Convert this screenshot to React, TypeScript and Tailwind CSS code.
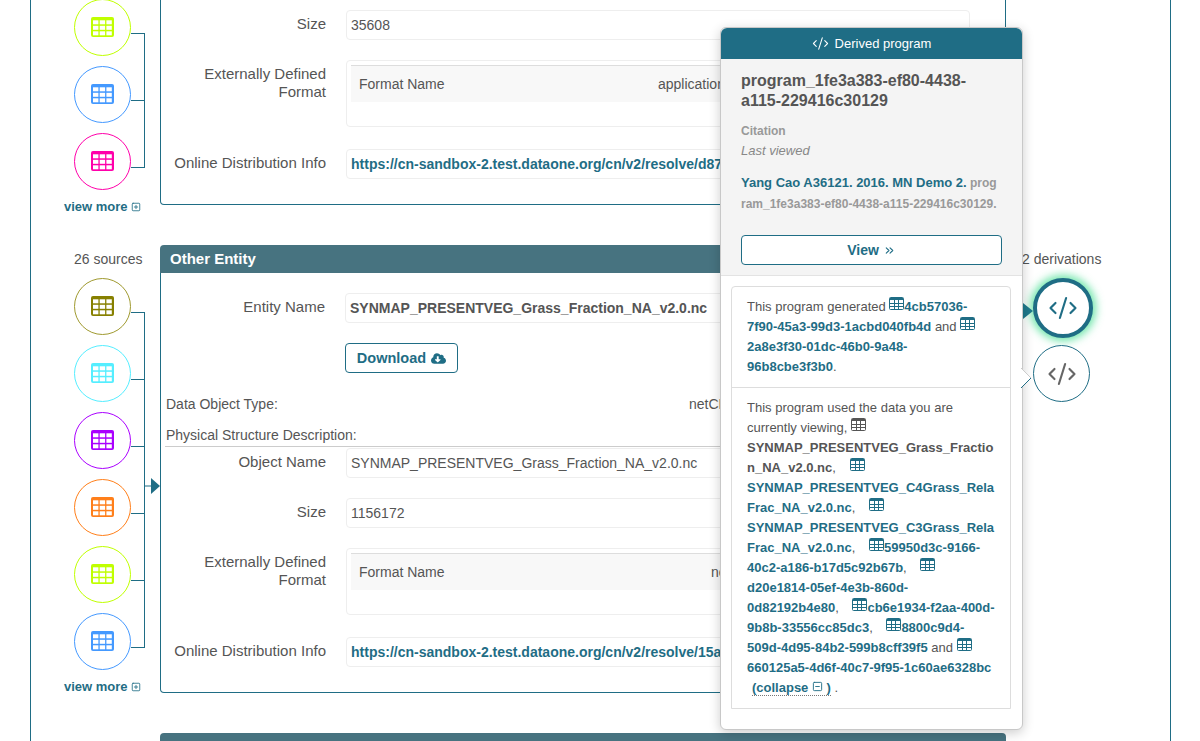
import { ReactNode } from "react";
import { ChevronsRight, CodeXml, SquareMinus, SquarePlus } from "lucide-react";
import { FaCloudDownloadAlt } from "react-icons/fa";

const TEAL = "text-[#1f6d85]";

const sourcesA = [
  "text-[#c0ff00] border-[#c0ff00]",
  "text-[#4499ff] border-[#4499ff]",
  "text-[#ff00aa] border-[#ff00aa]",
];
const sourcesB = [
  "text-[#878000] border-[#a09a30]",
  "text-[#55eeff] border-[#55eeff]",
  "text-[#aa00ff] border-[#aa00ff]",
  "text-[#ff7f1a] border-[#ff7f1a]",
  "text-[#c0ff00] border-[#c0ff00]",
  "text-[#4499ff] border-[#4499ff]",
];

function SolidTable() {
  return (
    <svg width="23" height="20" viewBox="0 0 23 20">
      <rect width="23" height="20" rx="2" fill="currentColor" />
      {[3.3, 8.8, 14.3].map((y) =>
        [2, 8.7, 15.4].map((x) => (
          <rect key={`${x}-${y}`} x={x} y={y} width="5.4" height="4" fill="#fff" />
        ))
      )}
    </svg>
  );
}

function LineTable({ gray }: { gray?: boolean }) {
  return (
    <svg
      width="15"
      height="13"
      viewBox="0 0 15 13"
      className={`inline-block align-[1px] ${gray ? "text-[#555]" : TEAL}`}
    >
      <rect x="0.5" y="0.5" width="14" height="12" rx="1" fill="none" stroke="currentColor" />
      <path d="M1 1h13v2H1z" fill="currentColor" />
      <path d="M5.5 3v9M9.5 3v9M1 6.5h13M1 9.5h13" stroke="currentColor" strokeWidth="1" />
    </svg>
  );
}

function SourceColumn({ items, arrow }: { items: string[]; arrow?: boolean }) {
  return (
    <div className="relative pl-[43px]">
      {items.map((cls, i) => (
        <div key={i} className="flex h-[67px]">
          <div className={`flex h-[57px] w-[57px] items-center justify-center rounded-full border bg-white pb-[2px] ${cls}`}>
            <SolidTable />
          </div>
          <div className="w-[14px]">
            <div className={`h-[35px] border-b border-[#1f6d85] ${i > 0 ? "border-r" : ""}`} />
            <div className={`h-[32px] border-[#1f6d85] ${i < items.length - 1 ? "border-r" : ""}`} />
          </div>
        </div>
      ))}
      {arrow && (
        <svg width="15" height="16" viewBox="0 0 15 16" className="absolute left-[114px] top-[200px]">
          <path d="M0 8h6" stroke="#1f6d85" />
          <path d="M6 0l9 8-9 8z" fill="#1f6d85" />
        </svg>
      )}
    </div>
  );
}

function ViewMore() {
  return (
    <div className={`-mb-[9px] flex h-[14px] items-center gap-[3px] pl-[33px] text-[13px] font-bold leading-[14px] ${TEAL}`}>
      view more
      <SquarePlus size={10} strokeWidth={2} />
    </div>
  );
}

function Field({ label, className, labelWidth, children }: { label: ReactNode; className?: string; labelWidth?: string; children: ReactNode }) {
  return (
    <div className={`flex gap-5 ${className ?? ""}`}>
      <div className={`${labelWidth ?? "w-[165px]"} shrink-0 pt-[5px] text-right text-[15px] leading-[18px]`}>{label}</div>
      {children}
    </div>
  );
}

function Value({ children, className }: { children: ReactNode; className?: string }) {
  return (
    <div className={`h-[30px] w-[624px] overflow-hidden whitespace-nowrap rounded border border-[#eee] pl-1 text-[14px] leading-[28px] ${className ?? ""}`}>
      {children}
    </div>
  );
}

function FormatBox({ value, valueClass }: { value: string; valueClass: string }) {
  return (
    <div className="h-[67px] w-[624px] rounded border border-[#eee] px-1 pt-1">
      <div className="flex h-[37px] items-center border-t border-[#ddd] bg-[#f8f8f8] pl-2 text-[14px]">
        <span className={valueClass}>Format Name</span>
        <span>{value}</span>
      </div>
    </div>
  );
}

function Panel2Body() {
  return (
    <div className="pt-5">
      <Field label="Entity Name" labelWidth="w-[164px]">
        <Value className="pl-[4px] font-bold">SYNMAP_PRESENTVEG_Grass_Fraction_NA_v2.0.nc</Value>
      </Field>
      <div className="ml-[184px] mt-5">
        <div className={`flex h-[30px] w-[113px] items-center justify-center gap-[5px] rounded border border-[#1f6d85] pt-px text-[14.5px] font-bold ${TEAL}`}>
          Download
          <FaCloudDownloadAlt size={15} />
        </div>
      </div>
      <div className="mt-[22px] flex pl-[5px] text-[14px] leading-[18px]">
        <span className="w-[523px]">Data Object Type:</span>
        <span>netCDF</span>
      </div>
      <div className="mt-[13px] pl-[5px] text-[14px] leading-[18px]">Physical Structure Description:</div>
      <div className="ml-1 mt-[2px] border-t border-[#ccc]" />
      <Field label="Object Name" className="mt-px">
        <Value>SYNMAP_PRESENTVEG_Grass_Fraction_NA_v2.0.nc</Value>
      </Field>
      <Field label="Size" className="mt-5">
        <Value>1156172</Value>
      </Field>
      <Field label="Externally Defined Format" className="mt-5">
        <FormatBox value="ne" valueClass="w-[352px]" />
      </Field>
      <Field label="Online Distribution Info" className="mt-[22px]">
        <Value className={`font-bold ${TEAL}`}>https://cn-sandbox-2.test.dataone.org/cn/v2/resolve/15a</Value>
      </Field>
    </div>
  );
}

const Link = ({ children }: { children: ReactNode }) => <b className={TEAL}>{children}</b>;
const Gray = ({ children }: { children: ReactNode }) => <b className="text-[#555]">{children}</b>;

const generatedLines: ReactNode[] = [
  <>This program generated <LineTable /><Link>4cb57036-</Link></>,
  <><Link>7f90-45a3-99d3-1acbd040fb4d</Link> and <LineTable /></>,
  <Link>2a8e3f30-01dc-46b0-9a48-</Link>,
  <><Link>96b8cbe3f3b0</Link>.</>,
];

const usedLines: ReactNode[] = [
  "This program used the data you are",
  <>currently viewing, <LineTable gray /></>,
  <Gray>SYNMAP_PRESENTVEG_Grass_Fractio</Gray>,
  <><Gray>n_NA_v2.0.nc</Gray>, <span className="ml-[10px]"><LineTable /></span></>,
  <Link>SYNMAP_PRESENTVEG_C4Grass_Rela</Link>,
  <><Link>Frac_NA_v2.0.nc</Link>, <span className="ml-[10px]"><LineTable /></span></>,
  <Link>SYNMAP_PRESENTVEG_C3Grass_Rela</Link>,
  <><Link>Frac_NA_v2.0.nc</Link>, <span className="ml-[10px]"><LineTable /></span><Link>59950d3c-9166-</Link></>,
  <><Link>40c2-a186-b17d5c92b67b</Link>, <span className="ml-[10px]"><LineTable /></span></>,
  <Link>d20e1814-05ef-4e3b-860d-</Link>,
  <><Link>0d82192b4e80</Link>, <span className="ml-[10px]"><LineTable /></span><Link>cb6e1934-f2aa-400d-</Link></>,
  <><Link>9b8b-33556cc85dc3</Link>, <span className="ml-[10px]"><LineTable /></span><Link>8800c9d4-</Link></>,
  <><Link>509d-4d95-84b2-599b8cff39f5</Link> and <LineTable /></>,
  <Link>660125a5-4d6f-40c7-9f95-1c60ae6328bc</Link>,
  <span className="ml-[5px]">
    <span className={`border-b border-dotted border-[#777] font-bold ${TEAL}`}>
      (collapse <SquareMinus size={11} strokeWidth={2} className="inline-block align-[0px]" /> )
    </span>{" "}.
  </span>,
];

function Lines({ lines }: { lines: ReactNode[] }) {
  return (
    <>
      {lines.map((line, i) => (
        <div key={i} className="h-5 whitespace-nowrap">{line}</div>
      ))}
    </>
  );
}

function Popover() {
  return (
    <div className="absolute left-[720px] top-[27px] z-10 w-[303px] rounded-md border border-[#c8c8c8] bg-white pb-5 shadow-[0_3px_12px_rgba(0,0,0,0.2)]">
      <div className="flex h-[31px] items-center justify-center gap-[6px] rounded-t-md bg-[#1f6d85] text-[13px] text-white">
        <CodeXml size={17} strokeWidth={1.5} />
        Derived program
      </div>
      <div className="h-[217px] border-b border-[#e3e3e3] bg-[#f4f4f4] px-5 pt-[12px]">
        <div className="text-[16px] font-bold leading-5 text-[#555]">
          program_1fe3a383-ef80-4438-
          <br />
          a115-229416c30129
        </div>
        <div className="mt-[10px] text-[12px] font-bold leading-5 text-[#999]">Citation</div>
        <div className="text-[13px] italic leading-5 text-[#888]">Last viewed</div>
        <div className="mt-[11px] whitespace-nowrap text-[12px] font-bold leading-[21px]">
          <span className={`text-[13px] ${TEAL}`}>Yang Cao A36121. 2016. MN Demo 2.</span> <span className="text-[#999]">prog</span>
          <br />
          <span className="text-[#999]">ram_1fe3a383-ef80-4438-a115-229416c30129.</span>
        </div>
        <div className={`mt-[20px] flex h-[30px] items-center justify-center gap-1 rounded border border-[#1f6d85] bg-white text-[14px] font-bold ${TEAL}`}>
          View
          <ChevronsRight size={13} strokeWidth={2} />
        </div>
      </div>
      <div className="ml-[10px] mr-[11px] mt-[10px] rounded-t border border-[#ddd] text-[13px] leading-5 text-[#555]">
        <div className="border-b border-[#ddd] px-[15px] pb-[10px] pt-[10px]">
          <Lines lines={generatedLines} />
        </div>
        <div className="px-[15px] pb-[10px] pt-[10px]">
          <Lines lines={usedLines} />
        </div>
      </div>
      <svg width="12" height="22" viewBox="0 0 12 22" className="absolute -right-[11px] top-[339px]">
        <path d="M0 1l10 10L0 21z" fill="#fff" />
        <path d="M0 1l10 10" stroke="#ccc" fill="none" />
        <path d="M10 11L0 21" stroke="#1f6d85" fill="none" />
      </svg>
    </div>
  );
}

export default function App() {
  return (
    <div className="relative h-[741px] overflow-hidden bg-white font-['Liberation_Sans',Arial,sans-serif] text-[#555]">
      <div className="ml-[30px] flex h-[741px] w-[1141px] flex-col gap-10 border-x border-[#1f6d85]">
        {/* first entity, scrolled off the top */}
        <div className="-mt-px flex">
          <div className="w-[129px] shrink-0">
            <SourceColumn items={sourcesA} />
            <ViewMore />
          </div>
          <div className="h-[206px] w-[846px] shrink-0 rounded-b border-x border-b border-[#1f6d85] pt-[11px]">
            <Field label="Size">
              <Value>35608</Value>
            </Field>
            <Field label="Externally Defined Format" className="mt-5">
              <FormatBox value="application" valueClass="w-[299px]" />
            </Field>
            <Field label="Online Distribution Info" className="mt-[22px]">
              <Value className={`font-bold ${TEAL}`}>https://cn-sandbox-2.test.dataone.org/cn/v2/resolve/d87</Value>
            </Field>
          </div>
        </div>

        {/* second entity */}
        <div className="flex">
          <div className="w-[129px] shrink-0">
            <div className="h-[33px] pl-[43px] pt-[5px] text-[14px] leading-[18px]">26 sources</div>
            <SourceColumn items={sourcesB} arrow />
            <ViewMore />
          </div>
          <div className="h-[448px] w-[846px] shrink-0">
            <div className="flex h-[28px] items-center rounded-t bg-[#477380] pl-[10px] pt-px text-[15px] font-bold text-white">
              Other Entity
            </div>
            <div className="h-[420px] rounded-b border-x border-b border-[#1f6d85]">
              <Panel2Body />
            </div>
          </div>
          <div className="relative pl-4">
            <div className="h-[33px] pt-[5px] text-[14px] leading-[18px]">2 derivations</div>
            <div className={`ml-[11px] flex h-[60px] w-[60px] items-center justify-center rounded-full border-4 border-[#1f6d85] bg-white shadow-[0_0_9px_3px_rgba(60,220,140,0.75)] ${TEAL}`}>
              <CodeXml size={30} strokeWidth={1.7} />
            </div>
            <div className="ml-[11px] mt-[7px] flex h-[57px] w-[57px] items-center justify-center rounded-full border border-[#1f6d85] bg-white text-[#666]">
              <CodeXml size={30} strokeWidth={1.7} />
            </div>
            <svg width="11" height="16" viewBox="0 0 11 16" className="absolute left-[17px] top-[58px]">
              <path d="M0 0l10 8-10 8z" fill="#1f7a8c" />
            </svg>
          </div>
        </div>

        {/* third entity, cut by the window */}
        <div className="ml-[129px] h-[28px] w-[846px] shrink-0 rounded-t bg-[#477380]" />
      </div>
      <Popover />
    </div>
  );
}
